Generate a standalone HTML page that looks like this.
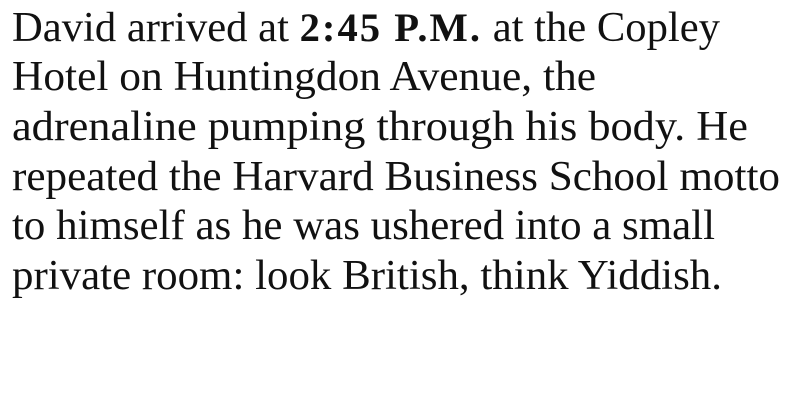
<!DOCTYPE html>
<html><head><meta charset="utf-8">
<style>
html,body{margin:0;padding:0;background:#fff;width:800px;height:400px;overflow:hidden}
.l{position:absolute;left:12px;white-space:nowrap;font-family:"Liberation Serif",serif;font-size:42px;color:#111;transform-origin:0 0;line-height:1}
b{font-weight:900;letter-spacing:2px;font-size:40px}
</style></head><body>
<div class="l" style="top:7px">David arrived at <b>2:45 P.M.</b> at the Copley</div>
<div class="l" style="top:56px">Hotel on Huntingdon Avenue, the</div>
<div class="l" style="top:106px">adrenaline pumping through his body. He</div>
<div class="l" style="top:156px">repeated the Harvard Business School motto</div>
<div class="l" style="top:205px">to himself as he was ushered into a small</div>
<div class="l" style="top:255px">private room: look British, think Yiddish.</div>
<script>
var w=[708,584,736,768,703,710];
var ls=document.querySelectorAll('.l');
for(var i=0;i<ls.length;i++){var r=ls[i].getBoundingClientRect().width;ls[i].style.transform='scaleX('+(w[i]/r)+')';}
</script>
</body></html>
